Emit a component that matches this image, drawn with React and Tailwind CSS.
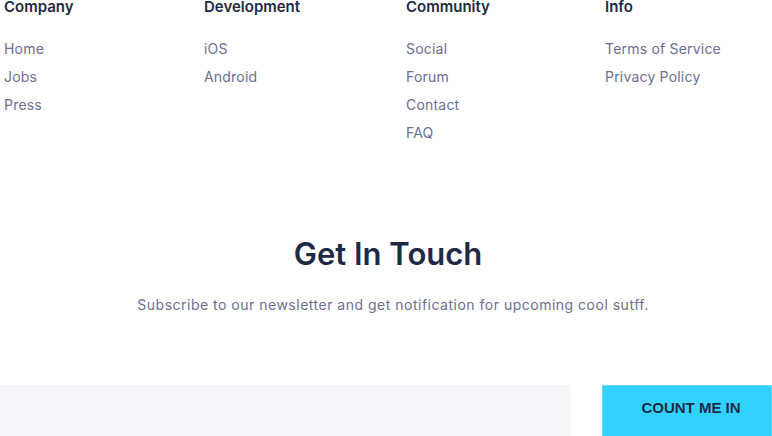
export default function App() {
  const cols = [
    { title: "Company", items: ["Home", "Jobs", "Press"], w: "w-[200px]" },
    { title: "Development", items: ["iOS", "Android"], w: "w-[202px]" },
    { title: "Community", items: ["Social", "Forum", "Contact", "FAQ"], w: "w-[199px]" },
    { title: "Info", items: ["Terms of Service", "Privacy Policy"], w: "w-[160px]" },
  ];
  return (
    <div className="w-[772px] h-[436px] overflow-hidden bg-white font-['Inter',sans-serif]">
      <div className="flex pl-[4px]">
        {cols.map((c) => (
          <div key={c.title} className={c.w}>
            <div className="text-[15px] leading-[13px] font-semibold text-[#1e2a45]">{c.title}</div>
            <ul className="mt-[27px] flex flex-col gap-[10px]">
              {c.items.map((it) => (
                <li key={it} className="text-[14px] leading-[18px] tracking-[0.2px] text-[#6b6f8e]">{it}</li>
              ))}
            </ul>
          </div>
        ))}
      </div>
      <div className="mt-[94px] pl-[4px] flex flex-col items-center">
        <h2 className="text-[31px] leading-[36px] font-semibold text-[#1e2a45]">Get In Touch</h2>
        <p className="mt-[23px] ml-[10px] text-[14px] leading-[20px] tracking-[0.5px] text-[#6b6f8e]">
          Subscribe to our newsletter and get notification for upcoming cool sutff.
        </p>
      </div>
      <div className="mt-[70px] flex gap-[31px]">
        <div className="w-[571px] h-[60px] bg-[#f5f6fa]" />
        <button className="w-[170px] h-[60px] flex items-start justify-center pt-[12px] pl-[8px] bg-[#33d1fd] border border-[#5ddcfd] text-[15px] leading-[20px] font-bold text-[#1e2a45] font-['Liberation_Sans',sans-serif]">
          COUNT ME IN
        </button>
      </div>
    </div>
  );
}
